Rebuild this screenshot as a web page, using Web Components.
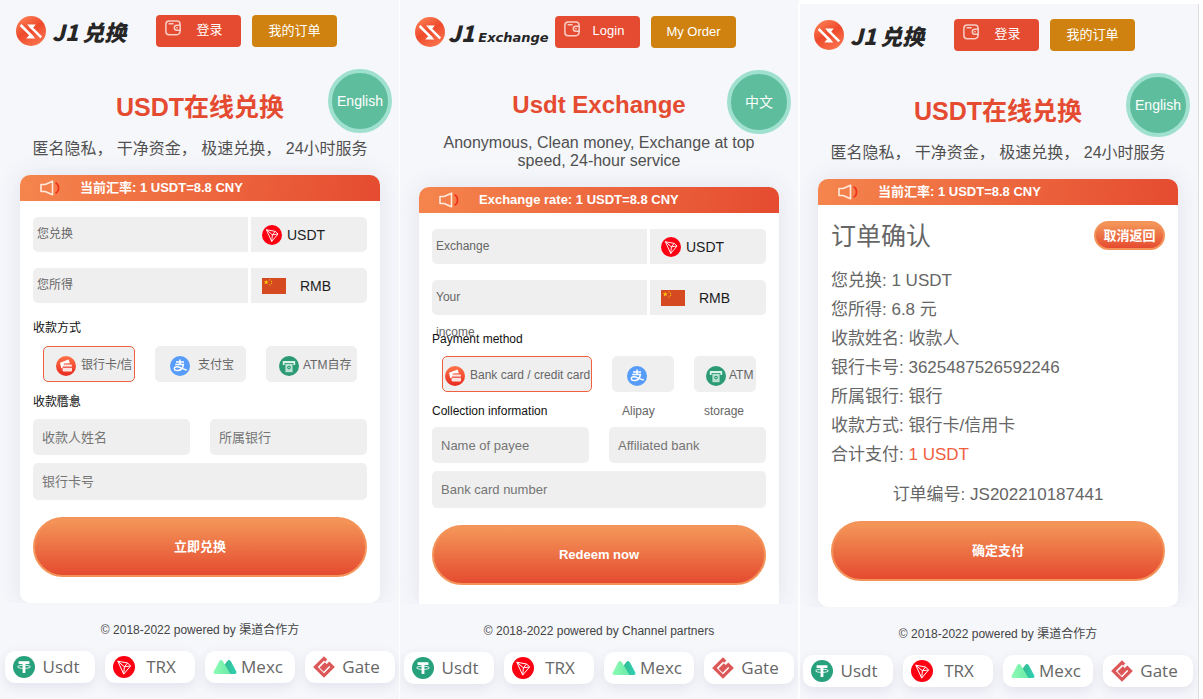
<!DOCTYPE html>
<html lang="zh">
<head>
<meta charset="utf-8">
<title>J1 兑换</title>
<style>
html, body { margin: 0; background: #fff; }
body {
  font-family: "Liberation Sans", Arial, "Noto Sans CJK SC", sans-serif;
  font-size: 12px;
  color: #333;
}
.screens {
  display: grid;
  grid-template-columns: 399fr 399fr 400fr;
  padding-right: 5px;
  min-height: 100vh;
  overflow: hidden;
}
.screens > j1-screen:not(:last-child) { margin-right: -1px; }
li b { font-weight: normal; color: #f0603f; }
</style>
</head>
<body>
<div class="screens">
  <j1-screen>
    <j1-header slot="header" lang="zh" login="登录" orders="我的订单"></j1-header>
    <j1-lang slot="lang">English</j1-lang>
    <j1-title slot="title">USDT在线兑换<span slot="sub">匿名隐私， 干净资金， 极速兑换， 24小时服务</span></j1-title>
    <j1-card rate="当前汇率: 1 USDT=8.8 CNY">
      <j1-amount label="您兑换" icon="trx" unit="USDT"></j1-amount>
      <j1-amount label="您所得" icon="flag" unit="RMB"></j1-amount>
      <j1-section label="收款方式">
        <j1-methods cols="92fr 91fr 91fr" options="card,12,0,5,银行卡/信用卡|alipay,14,0,8,支付宝|atm,12,0,4,ATM自存"></j1-methods>
      </j1-section>
      <j1-payee label="收款信息" name="收款人姓名" bank="所属银行" number="银行卡号"></j1-payee>
      <j1-button>立即兑换</j1-button>
    </j1-card>
    <j1-footer slot="footer">© 2018-2022 powered by 渠道合作方</j1-footer>
  </j1-screen>

  <j1-screen lang="en" class="en">
    <j1-header slot="header" lang="en" login="Login" orders="My Order"></j1-header>
    <j1-lang slot="lang">中文</j1-lang>
    <j1-title slot="title" lang="en">Usdt Exchange<span slot="sub">Anonymous, Clean money, Exchange at top speed, 24-hour service</span></j1-title>
    <j1-card flat rate="Exchange rate: 1 USDT=8.8 CNY">
      <j1-amount label="Exchange" icon="trx" unit="USDT"></j1-amount>
      <j1-amount label="Your income" icon="flag" unit="RMB"></j1-amount>
      <j1-section label="Payment method">
        <j1-methods cols="150fr 62fr 62fr" options="card,2,0,5,Bank card / credit card|alipay,9,5,5,Alipay|atm,9,2,3,ATM storage"></j1-methods>
      </j1-section>
      <j1-payee label="Collection information" name="Name of payee" bank="Affiliated bank" number="Bank card number"></j1-payee>
      <j1-button>Redeem now</j1-button>
    </j1-card>
    <j1-footer slot="footer">© 2018-2022 powered by Channel partners</j1-footer>
  </j1-screen>

  <j1-screen class="confirm">
    <j1-header slot="header" lang="zh" login="登录" orders="我的订单"></j1-header>
    <j1-lang slot="lang">English</j1-lang>
    <j1-title slot="title">USDT在线兑换<span slot="sub">匿名隐私， 干净资金， 极速兑换， 24小时服务</span></j1-title>
    <j1-card rate="当前汇率: 1 USDT=8.8 CNY">
      <j1-order heading="订单确认" number="订单编号: JS202210187441">
        <j1-button small slot="action">取消返回</j1-button>
        <li>您兑换: 1 USDT</li>
        <li>您所得: 6.8 元</li>
        <li>收款姓名: 收款人</li>
        <li>银行卡号: 3625487526592246</li>
        <li>所属银行: 银行</li>
        <li>收款方式: 银行卡/信用卡</li>
        <li>合计支付: <b>1 USDT</b></li>
      </j1-order>
      <j1-button>确定支付</j1-button>
    </j1-card>
    <j1-footer slot="footer">© 2018-2022 powered by 渠道合作方</j1-footer>
  </j1-screen>
</div>

<script>
const ICONS = {
  logo: `<svg viewBox="0 0 30 30"><defs><linearGradient id="g" x1="0" y1="0" x2=".6" y2="1"><stop offset="0" stop-color="#ff8a5c"/><stop offset=".55" stop-color="#ee4a2c"/><stop offset="1" stop-color="#f9704a"/></linearGradient></defs><circle cx="15" cy="15" r="15" fill="url(#g)"/><path d="M4.600 9 16.800 21.200M14 10.200 25.200 21.300" stroke="#fff" stroke-width="2.500"/><path d="M11 8.600H19.800L16.600 12.400 15.600 13.200zM19.400 22.500H10.300L13.400 19 14.600 17.400z" fill="#fff"/></svg>`,
  wallet: `<svg viewBox="0 0 16 16" fill="none" stroke="#fff" stroke-opacity=".72" stroke-width="1.5"><path d="M15 4.800V4A3 3 0 0 0 12 1H4A3.200 3.200 0 0 0 .9 4.200v7.300A3.200 3.200 0 0 0 4 14.700h8a3 3 0 0 0 3-3v-1"/><path d="M15.200 5.200h-3.400a2.500 2.500 0 0 0 0 5h3.400zM3.600 3.800h5"/><circle cx="12" cy="7.700" r=".7" fill="#fff" stroke="none"/></svg>`,
  speaker: `<svg viewBox="0 0 20 16" fill="none" stroke-width="1.600" stroke-linejoin="round"><path d="M1 4.500h4.200L12.500 1.200v13.600L5.200 11.500H1z" stroke="#ffe9dc"/><path d="M15.600 2.600c4 2.600 4 8.200 0 10.800" stroke="#f0301c"/></svg>`,
  trx: `<svg viewBox="0 0 22 22"><circle cx="11" cy="11" r="11" fill="#ff0013"/><path d="M4.800 5.200 14.600 7l3 2.900-6.900 8.200zM4.800 5.200l6.600 5.600 6.200-.9M14.600 7l-3.200 3.800-.7 7.300" fill="none" stroke="#fff" stroke-width="1" stroke-linejoin="round"/></svg>`,
  flag: `<svg viewBox="0 0 24 16"><path fill="#d64a22" d="M0 0h24v16H0z"/><g fill="#ffd400"><path d="m4.200 1.700.6 1.700h1.800L5.200 4.500l.5 1.700-1.500-1-1.500 1 .5-1.700L1.800 3.400h1.800z"/><circle cx="8" cy="1.800" r=".6"/><circle cx="9.600" cy="3.300" r=".6"/><circle cx="9.600" cy="5.300" r=".6"/><circle cx="8" cy="7" r=".6"/></g></svg>`,
  card: `<svg viewBox="0 0 20 20"><defs><linearGradient id="c" x1="0" y1="0" x2="0" y2="1"><stop offset="0" stop-color="#ff7448"/><stop offset="1" stop-color="#e8291f"/></linearGradient></defs><circle cx="10" cy="10" r="10" fill="url(#c)"/><path d="m4 6.800 8.600-3.400 1.300 3.800-6 .4-1 4.200-1.600.5z" fill="#fff"/><rect x="6.600" y="8.400" width="9.400" height="7" rx="1.200" fill="#fff" fill-opacity=".85"/><path d="M6.600 11.200h9.400" stroke="#ee4432" stroke-width="1.200"/></svg>`,
  alipay: `<svg viewBox="0 0 20 20"><circle cx="10" cy="10" r="10" fill="#569cf8"/><path d="M6 6h8M10 3.500v5M5.200 8.600h8.200c-.6 3.800-3.200 6-6.200 6-3.600 0-4-3.700-.4-3.800 3-.1 5.600 2.400 10 3.100" fill="none" stroke="#fff" stroke-width="1.500"/></svg>`,
  atm: `<svg viewBox="0 0 20 20"><circle cx="10" cy="10" r="10" fill="#2c9a74"/><path d="M3.800 5h12.400v4h-1.800V7H5.600v2H3.800z" fill="#d9f3e8"/><path d="M6.400 7.800h7.200v8.400H6.400z" fill="#b9e2d2"/><circle cx="10" cy="11.600" r="1.800" fill="#2c9a74"/><circle cx="10" cy="11.600" r=".7" fill="#fff"/></svg>`,
  usdt: `<svg viewBox="0 0 22 22"><circle cx="11" cy="11" r="11" fill="#26a17b"/><path d="M5.600 5.200h10.800v2.700h-4V17H9.600V7.900h-4z" fill="#fff"/><ellipse cx="11" cy="10.800" rx="6.400" ry="1.600" fill="none" stroke="#fff" stroke-width=".9"/></svg>`,
  mexc: `<svg viewBox="0 0 24 22"><defs><linearGradient id="a"><stop offset="0" stop-color="#8dfcb4"/><stop offset="1" stop-color="#6be9a9"/></linearGradient><linearGradient id="b"><stop offset="0" stop-color="#33b98f"/><stop offset="1" stop-color="#30d2b4"/></linearGradient></defs><path d="M11 9.500 14.300 5Q16 3 17.700 5L23.300 15.500Q24 18 21.500 18H12z" fill="url(#b)"/><path d="M.8 15.500 6.400 5Q8 3 9.700 5L17.500 18H2Q0 17.800.8 15.500z" fill="url(#a)"/></svg>`,
  gate: `<svg viewBox="0 0 22 22"><path d="M13.200 4.600 11 2.400 2.400 11 11 19.600 19.600 11 16.300 7.700 10.600 13.400 8.800 11.600 13 7.400" fill="none" stroke="#dc5757" stroke-width="3.200"/></svg>`
};

/* Registers an element whose shadow root is built once from its attributes. */
function define(tag, css, render) {
  customElements.define(tag, class extends HTMLElement {
    constructor() {
      super();
      this.attachShadow({ mode: 'open' });
    }
    connectedCallback() {
      if (this.shadowRoot.firstChild) return;
      const t = document.createElement('template');
      t.innerHTML = `<style>*{box-sizing:border-box}svg{display:block;width:100%;height:100%}${css}</style>${render(this)}`;
      this.shadowRoot.append(t.content.cloneNode(true));
    }
  });
}
const at = (el, name) => el.getAttribute(name) || '';

define('j1-screen', `
  :host { display: block; position: relative; min-width: 0; overflow: hidden; background: #f6f7fb; }
  :host(.en) { padding-top: 1px; box-shadow: inset 1px 0 #fff; }
  :host(.confirm) { margin-top: 4px; box-shadow: inset 2px 0 #fff, 1px 0 #ddd; }
  main { position: relative; overflow: hidden; }
`, () => `<main><slot name="header"></slot><slot name="lang"></slot><slot name="title"></slot><slot></slot></main><slot name="footer"></slot>`);

define('j1-header', `
  :host { display: flex; align-items: center; padding: 15px 16px 0; }
  .logo { flex: 0 0 140px; display: flex; align-items: center; color: #262626; text-decoration: none; }
  .mark { width: 30px; height: 30px; margin-right: 6px; }
  .en .mark { margin-right: 3px; }
  .name { display: flex; align-items: baseline; gap: 4px; white-space: nowrap;
    font: italic 900 22px/30px "Noto Sans CJK SC", sans-serif; }
  .en .word { font: italic bold 13px/20px "DejaVu Sans", sans-serif; }
  button { width: 85px; height: 32px; padding: 0; border: 0; border-radius: 4px; color: #fff;
    font: 13px/30px "Liberation Sans", "Noto Sans CJK SC", sans-serif; }
  .login { display: flex; padding-left: 9px; background: #e54b30; margin-right: 11px; }
  .login i { width: 16px; height: 16px; margin-top: 5px; }
  .login span { flex: 1; padding-right: 3px; }
  .orders { background: #cf820f; }
`, el => `
  <a class="logo ${at(el, 'lang')}" href="#"><span class="mark">${ICONS.logo}</span>
    <span class="name"><span>J1</span><span class="word">${at(el, 'lang') === 'en' ? 'Exchange' : '兑换'}</span></span></a>
  <button class="login"><i>${ICONS.wallet}</i><span>${at(el, 'login')}</span></button>
  <button class="orders">${at(el, 'orders')}</button>`);

define('j1-lang', `
  :host { position: absolute; top: 69px; right: 8px; }
  button { display: block; width: 64px; height: 64px; padding: 0; border: 4px solid #a0e0cf; border-radius: 50%; background: #5ebd9d;
    color: #fff; font: 14px/20px "Liberation Sans", "Noto Sans CJK SC", sans-serif; }
`, () => `<button><slot></slot></button>`);

define('j1-title', `
  :host { display: block; margin-top: 43px; padding: 0 30px; text-align: center; }
  h1 { margin: 0 0 16px; font-size: 25px; line-height: 34px; color: #e54b30; }
  :host([lang=en]) h1 { font-size: 24px; line-height: 27px; }
  p { margin: 0 0 17px; font-size: 16px; line-height: 18px; color: #505050; }
`, () => `<h1><slot></slot></h1><p><slot name="sub"></slot></p>`);

define('j1-card', `
  :host { display: block; margin: 0 20px; border-radius: 10px; background: #fff; box-shadow: 0 0 25px rgba(60, 60, 110, .1); }
  :host([flat]) { border-radius: 10px 10px 0 0; }
  header { display: flex; align-items: center; height: 26px; padding-left: 20px; border-radius: 10px 10px 0 0;
    background: linear-gradient(100deg, #f5854d, #e54b30); color: #fff; font-size: 13px; font-weight: bold; line-height: 24px; }
  header i { width: 20px; height: 16px; margin-right: 20px; }
  .body { padding: 16px 13px 26px; }
  :host([flat]) .body { padding-bottom: 19px; }
`, el => `<header><i>${ICONS.speaker}</i><span>${at(el, 'rate')}</span></header><div class="body"><slot></slot></div>`);

define('j1-amount', `
  :host { display: grid; grid-template: 35px / minmax(0, 215fr) minmax(0, 116fr); gap: 3px; margin-bottom: 16px; }
  :host(:nth-of-type(2)) { margin-bottom: 0; }
  .amount { display: flex; background: #efefef; border-radius: 5px 0 0 5px; }
  label { flex: 0 0 60px; padding-left: 4px; font-size: 12px; line-height: 35px; color: #666; }
  input { flex: 1; min-width: 0; border: 0; background: none; font-size: 13px; }
  .unit { display: flex; align-items: center; padding-left: 11px; background: #efefef; border-radius: 0 5px 5px 0; }
  i { width: 20px; height: 20px; margin-right: 5px; }
  i.flag { width: 24px; height: 16px; margin-right: 14px; }
  select { flex: 1; min-width: 0; padding: 0; border: 0; appearance: none; background: none; color: #1c1c1c;
    font: 14px/20px "Liberation Sans", sans-serif; }
`, el => `
  <div class="amount"><label for="v">${at(el, 'label')}</label><input id="v" inputmode="decimal"></div>
  <div class="unit"><i class="${at(el, 'icon')}">${ICONS[at(el, 'icon')]}</i><select aria-label="${at(el, 'unit')}"><option>${at(el, 'unit')}</option></select></div>`);

const heading = `h2 { margin: 0; font-size: 12px; font-weight: normal; line-height: 16px; color: #111; }
  :host(:lang(en)) h2 { line-height: 14px; }`;

define('j1-section', `
  :host { display: block; padding-top: 17px; }
  ${heading}
  .content { padding: 10px 10px 0; }
`, el => `<h2>${at(el, 'label')}</h2><div class="content"><slot></slot></div>`);

define('j1-methods', `
  :host { display: grid; gap: 20px; }
  label { position: relative; min-width: 0; height: 36px; border: 1px solid #efefef; border-radius: 5px; background: #efefef;
    font-size: 12px; line-height: 36px; color: #666; }
  label:has(:checked) { border-color: #f0603f; }
  input { position: absolute; opacity: 0; margin: 0; }
  i { display: inline-block; width: 20px; height: 20px; vertical-align: middle; }
`, el => {
  el.style.gridTemplateColumns = at(el, 'cols');
  return at(el, 'options').split('|').map((o, n) => {
    const [icon, pad, lead, gap, text] = o.split(',');
    return `<label style="padding-left:${pad}px"><input type="radio" name="method" ${n ? '' : 'checked'}><i style="margin-left:${lead}px;margin-right:${gap}px">${ICONS[icon]}</i>${text}</label>`;
  }).join('');
});

define('j1-payee', `
  :host { display: block; padding-top: 12px; }
  ${heading}
  h2 { padding-bottom: 9px; }
  .grid { display: grid; grid-template-columns: 1fr 1fr; gap: 8px 20px; }
  input { min-width: 0; height: 36px; padding: 0 9px; border: 0; border-radius: 5px; background: #efefef;
    font: 13px/20px "Liberation Sans", "Noto Sans CJK SC", sans-serif; }
  input::placeholder { color: #757575; }
  .wide { grid-column: 1 / -1; height: 37px; }
`, el => `<h2>${at(el, 'label')}</h2><div class="grid">
  <input placeholder="${at(el, 'name')}" aria-label="${at(el, 'name')}"><input placeholder="${at(el, 'bank')}" aria-label="${at(el, 'bank')}">
  <input class="wide" placeholder="${at(el, 'number')}" aria-label="${at(el, 'number')}"></div>`);

define('j1-button', `
  :host { display: block; margin-top: 17px; }
  :host([small]) { margin-top: 0; }
  button { display: block; width: 100%; height: 60px; padding: 0; border: 2px solid #f3935a; border-radius: 30px;
    background: linear-gradient(#f49759, #e54b30); color: #fff; font: bold 13px/20px "Liberation Sans", "Noto Sans CJK SC", sans-serif; }
  :host([small]) button { width: 71px; height: 29px; }
`, () => `<button><slot></slot></button>`);

define('j1-order', `
  :host { display: block; color: #666; font-size: 17px; line-height: 29px; }
  header { display: flex; justify-content: space-between; align-items: flex-start; }
  h2 { margin: 0; font-size: 25px; font-weight: normal; line-height: 30px; }
  ul { margin: 15px 0 0; padding: 0; list-style: none; }
  p { margin: 11px 0 -5px; text-align: center; }
`, el => `<header><h2>${at(el, 'heading')}</h2><slot name="action"></slot></header><ul><slot></slot></ul><p>${at(el, 'number')}</p>`);

define('j1-footer', `
  :host { display: block; padding: 19px 5px 16px; }
  p { margin: 0 0 13px; font-size: 12px; line-height: 16px; text-align: center; color: #444; }
  nav { display: grid; grid-template-columns: repeat(4, 1fr); gap: 10px; }
  a { display: flex; align-items: center; height: 32px; padding: 0 8px; border-radius: 10px; background: #fff;
    box-shadow: 0 4px 12px rgba(60, 60, 110, .1); text-decoration: none; color: #666; font: 17px/24px "Open Sans", sans-serif; }
  i { width: 22px; height: 22px; }
  i.mexc { width: 24px; }
  span { flex: 1; text-align: center; }
`, () => `<p><slot></slot></p><nav>${[['usdt', 'Usdt'], ['trx', 'TRX'], ['mexc', 'Mexc'], ['gate', 'Gate']]
  .map(([i, t]) => `<a href="#"><i class="${i}">${ICONS[i]}</i><span>${t}</span></a>`).join('')}</nav>`);
</script>
</body>
</html>
